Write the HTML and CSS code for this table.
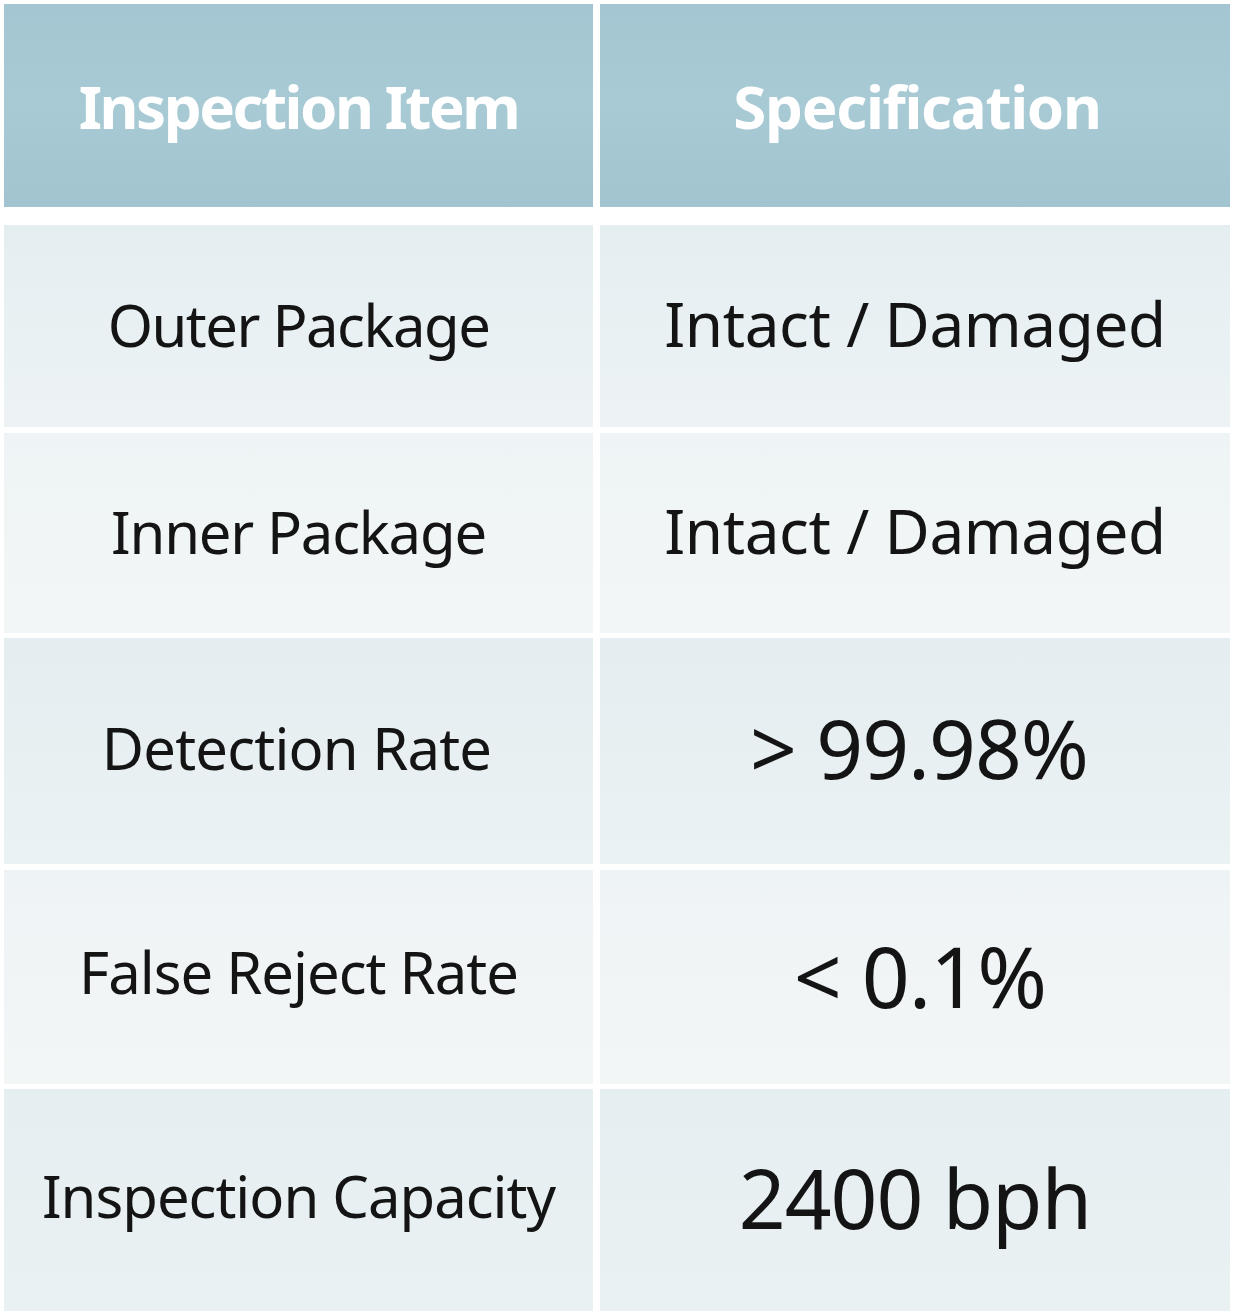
FILE: index.html
```html
<!DOCTYPE html>
<html lang="en">
<head>
<meta charset="utf-8">
<title>Inspection Specification</title>
<link rel="stylesheet" href="styles.css">
</head>
<body>
<div class="table">
  <div class="row head">
    <div class="cell c1 h-item">Inspection Item</div>
    <div class="cell c2 h-spec">Specification</div>
  </div>
  <div class="body">
    <div class="row r1">
      <div class="cell c1 t-outer">Outer Package</div>
      <div class="cell c2 t-intact">Intact / Damaged</div>
    </div>
    <div class="row r2">
      <div class="cell c1 t-inner">Inner Package</div>
      <div class="cell c2 t-intact">Intact / Damaged</div>
    </div>
    <div class="row r3">
      <div class="cell c1 t-det">Detection Rate</div>
      <div class="cell c2 t-det-v">&gt; 99.98%</div>
    </div>
    <div class="row r4">
      <div class="cell c1 t-false">False Reject Rate</div>
      <div class="cell c2 t-false-v">&lt; 0.1%</div>
    </div>
    <div class="row r5">
      <div class="cell c1 t-cap">Inspection Capacity</div>
      <div class="cell c2 t-cap-v">2400 bph</div>
    </div>
  </div>
</div>
</body>
</html>
```

FILE: styles.css
```css
html, body {
  margin: 0;
  padding: 0;
  background: #ffffff;
}
body {
  width: 1234px;
  height: 1314px;
  overflow: hidden;
  font-family: "Noto Sans", "Open Sans", "DejaVu Sans", sans-serif;
  color: #141414;
}
.table {
  padding: 4px 4px 0 4px;
}
.row {
  display: grid;
  grid-template-columns: 589px 630px;
  column-gap: 7px;
}
.cell {
  display: flex;
  align-items: center;
  justify-content: center;
  white-space: nowrap;
  font-size: 58px;
  letter-spacing: -1.5px;
}
.head {
  height: 203px;
}
.head .cell {
  background: linear-gradient(180deg, #a3c6d2 0%, #a8cad5 50%, #a2c4d0 100%);
  color: #ffffff;
  font-weight: 700;
  font-size: 60px;
  padding-bottom: 0;
}
.h-item { letter-spacing: -2.5px; }
.h-spec { letter-spacing: -1.3px; padding-left: 4px; }
.body {
  margin-top: 18px;
  display: flex;
  flex-direction: column;
  gap: 5px;
}
.r1 { height: 202px; }
.r2 { height: 200px; margin-top: 1px; }
.r3 { height: 226px; }
.r4 { height: 214px; margin-top: 1px; }
.r5 { height: 222px; }
.r1 .cell { background: linear-gradient(180deg, #e4eef1 0%, #edf3f5 100%); }
.r2 .cell { background: linear-gradient(180deg, #eef4f5 0%, #f3f6f7 100%); }
.r3 .cell { background: linear-gradient(180deg, #e4edf0 0%, #ebf2f4 100%); }
.r4 .cell { background: linear-gradient(180deg, #eef3f5 0%, #f3f6f7 100%); }
.r5 .cell { background: linear-gradient(180deg, #e5eef1 0%, #eaf1f3 100%); }
.c1 { padding-bottom: 4px; }
.t-inner { letter-spacing: -1.2px; }
.t-intact { font-size: 62px; letter-spacing: -0.4px; padding-bottom: 6px; }
.t-det-v { font-size: 82px; letter-spacing: -1px; padding-left: 8px; padding-bottom: 8px; }
.t-false-v { font-size: 84px; letter-spacing: -1px; padding-bottom: 4px; padding-left: 10px; }
.t-cap-v { font-size: 82px; letter-spacing: -1px; padding-bottom: 6px; }
.t-cap { letter-spacing: -1px; padding-bottom: 10px; }
.t-false { letter-spacing: -1px; padding-bottom: 12px; }
.t-det { letter-spacing: -0.8px; padding-bottom: 8px; padding-right: 4px; }
```
